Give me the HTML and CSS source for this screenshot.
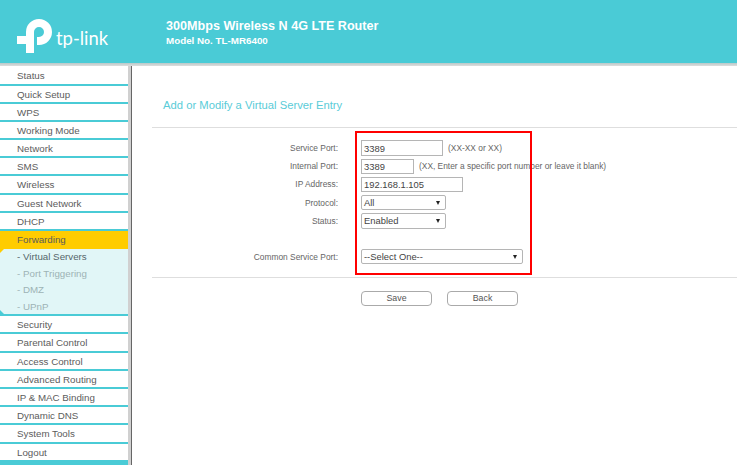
FILE: index.html
```html
<!DOCTYPE html>
<html lang="en">
<head>
<meta charset="utf-8">
<title>TL-MR6400</title>
<link rel="stylesheet" href="styles.css">
</head>
<body>
<header class="top">
  <div class="logo">
    <svg class="logo-mark" width="35" height="34" viewBox="0 0 35 34" aria-hidden="true">
      <path d="M0 17H9V13A13 13 0 1 1 22 26H20V18H22A5 5 0 1 0 17 13V34H9V25H0Z" fill="#fff"/>
    </svg>
    <span class="logo-text">tp-link</span>
  </div>
  <div class="product">
    <div class="product-name">300Mbps Wireless N 4G LTE Router</div>
    <div class="product-model">Model No. TL-MR6400</div>
  </div>
</header>
<div class="shade"></div>
<div class="body">
  <nav class="side">
    <a class="item">Status</a>
    <a class="item">Quick Setup</a>
    <a class="item">WPS</a>
    <a class="item">Working Mode</a>
    <a class="item">Network</a>
    <a class="item">SMS</a>
    <a class="item">Wireless</a>
    <a class="item">Guest Network</a>
    <a class="item">DHCP</a>
    <a class="item active">Forwarding</a>
    <div class="sub">
      <a class="sub-item current">- Virtual Servers</a>
      <a class="sub-item">- Port Triggering</a>
      <a class="sub-item">- DMZ</a>
      <a class="sub-item">- UPnP</a>
    </div>
    <a class="item">Security</a>
    <a class="item">Parental Control</a>
    <a class="item">Access Control</a>
    <a class="item">Advanced Routing</a>
    <a class="item">IP &amp; MAC Binding</a>
    <a class="item">Dynamic DNS</a>
    <a class="item">System Tools</a>
    <a class="item">Logout</a>
    <div class="side-end"></div>
  </nav>
  <main class="content">
    <h1 class="title">Add or Modify a Virtual Server Entry</h1>
    <div class="rule"></div>
    <form class="form">
      <div class="row"><label class="lbl">Service Port:</label><input class="field w82" value="3389"><span class="hint">(XX-XX or XX)</span></div>
      <div class="row"><label class="lbl">Internal Port:</label><input class="field w53" value="3389"><span class="hint">(XX, Enter a specific port number or leave it blank)</span></div>
      <div class="row"><label class="lbl">IP Address:</label><input class="field w102" value="192.168.1.105"></div>
      <div class="row"><label class="lbl">Protocol:</label><div class="select w85"><span>All</span><i class="arrow"></i></div></div>
      <div class="row"><label class="lbl">Status:</label><div class="select w85"><span>Enabled</span><i class="arrow"></i></div></div>
      <div class="row spaced"><label class="lbl">Common Service Port:</label><div class="select w162"><span>--Select One--</span><i class="arrow"></i></div></div>
    </form>
    <div class="rule rule-low"></div>
    <div class="buttons">
      <button class="btn" type="button">Save</button>
      <button class="btn" type="button">Back</button>
    </div>
    <div class="highlight"></div>
  </main>
</div>
</body>
</html>
```
FILE: styles.css
```css
* { box-sizing: border-box; }
html, body { margin: 0; height: 100%; overflow: hidden; }
body {
  width: 737px;
  height: 465px;
  background: #fff;
  font-family: "Liberation Sans", Arial, sans-serif;
  color: #555;
}
.top {
  height: 63px;
  background: #4acbd6;
  display: flex;
}
.logo {
  width: 166px;
  display: flex;
  align-items: flex-start;
  padding: 19px 0 0 17px;
}
.logo-mark { flex: none; }
.logo-text {
  font-family: "Lato", sans-serif;
  font-weight: 400;
  font-size: 18.4px;
  line-height: 22px;
  color: #fff;
  margin: 8px 0 0 4px;
}
.product { color: #fff; font-weight: bold; padding-top: 18px; }
.product-name { font-size: 12.6px; line-height: 16px; }
.product-model { font-size: 9.8px; line-height: 14px; }
.shade { height: 3px; background: linear-gradient(#b9c9c9, #ddd); }
.body { display: flex; height: 399px; }
.side {
  width: 132px;
  flex: none;
  border-right: 1px solid #666;
  background: #fff;
  display: flex;
  flex-direction: column;
  position: relative;
}
.side::after {
  content: "";
  position: absolute;
  top: 0; bottom: 0; right: 0;
  width: 3px;
  background: #d0d0d0;
}
.item {
  display: block;
  height: 18.2px;
  line-height: 17px;
  padding-left: 17px;
  font-size: 9.75px;
  color: #5c5c5c;
  border-bottom: 2px solid #4acbd6;
  white-space: nowrap;
}
.item:first-child { height: 19.5px; line-height: 19px; }
.item.active {
  background: #fc0;
  border-bottom: 0;
}
.sub {
  background: #e1f6f7;
  height: 67px;
  border-bottom: 2px solid #4acbd6;
  position: relative;
}
.sub::before {
  content: "";
  position: absolute;
  left: 0; top: 0;
  border-top: 4px solid #fc0;
  border-right: 4px solid transparent;
}
.sub::after {
  content: "";
  position: absolute;
  left: 0; bottom: 0;
  border-bottom: 4px solid #4acbd6;
  border-right: 4px solid transparent;
}
.sub-item {
  display: block;
  height: 16.6px;
  line-height: 16.6px;
  padding-left: 17px;
  font-size: 9.75px;
  color: #9db3b5;
  white-space: nowrap;
}
.sub-item.current { color: #56666a; }
.side-end { flex: 1; background: #4acbd6; }
.content {
  flex: 1;
  position: relative;
  padding-left: 20px;
  min-width: 0;
}
.title {
  margin: 0;
  padding: 31px 0 0 11px;
  height: 61px;
  font-size: 11.25px;
  line-height: 16px;
  font-weight: normal;
  color: #5accd8;
}
.rule { height: 1px; background: #dedede; }
.form { padding-top: 11px; height: 149px; }
.row {
  display: flex;
  align-items: center;
  height: 18.2px;
  font-size: 8.4px;
}
.row.spaced { margin-top: 17.5px; }
.lbl {
  width: 186px;
  text-align: right;
  margin-right: 23px;
  color: #666;
  flex: none;
}
.field, .select {
  height: 15.5px;
  border: 1px solid #b5b5b5;
  background: #fff;
  font-family: inherit;
  font-size: 9.4px;
  color: #444;
  padding: 0 2px;
  flex: none;
}
.select {
  display: flex;
  align-items: center;
  justify-content: space-between;
  border-radius: 2px;
}
.arrow {
  width: 0; height: 0;
  margin-right: 3px;
  border-left: 2.5px solid transparent;
  border-right: 2.5px solid transparent;
  border-top: 4px solid #222;
}
.w82 { width: 82px; }
.w53 { width: 53px; }
.w102 { width: 102px; }
.w85 { width: 85px; }
.w162 { width: 162px; }
.hint { margin-left: 5px; font-size: 8.4px; color: #666; white-space: nowrap; }
.buttons {
  display: flex;
  gap: 15px;
  padding: 13px 0 0 209px;
}
.btn {
  width: 71px;
  height: 15px;
  padding: 0;
  border: 1px solid #aaa;
  border-radius: 4px;
  background: #fff;
  font-family: inherit;
  font-size: 8.8px;
  line-height: 13px;
  color: #555;
}
.highlight {
  position: absolute;
  left: 223px;
  top: 65px;
  width: 177px;
  height: 144px;
  border: 2px solid #f00;
  pointer-events: none;
}
```
